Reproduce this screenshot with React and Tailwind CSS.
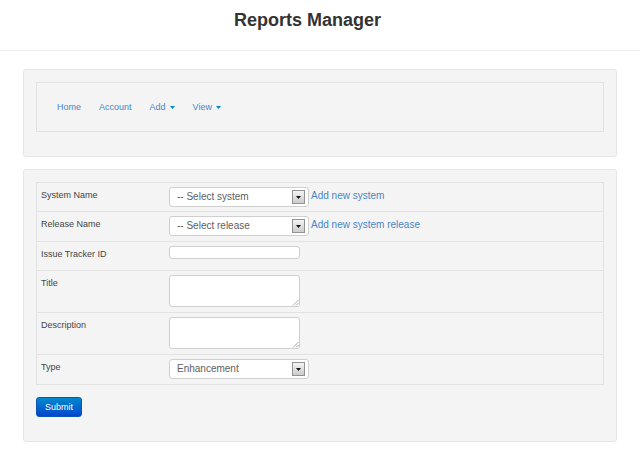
const FIELD_BORDER = 'border border-[#cfcfcf] rounded-[3px] bg-white';

function Caret() {
  return (
    <svg aria-hidden="true" className="ml-1" width="5" height="3" viewBox="0 0 5 3">
      <path d="M0 0h5L2.5 3z" fill="#0088cc" />
    </svg>
  );
}

function Card({ children }) {
  return (
    <div className="rounded-[3px] border border-[#e6e6e6] bg-[#f4f4f4] px-3 pt-3 pb-6">
      {children}
    </div>
  );
}

function Row({ id, label, height, children }) {
  return (
    <div className={`flex items-start border-t border-[#e2e2e2] pt-1 pl-1 ${height}`}>
      <label htmlFor={id} className="w-32 shrink-0 pt-px text-[9px] leading-[15px] text-[#444]">
        {label}
      </label>
      {children}
    </div>
  );
}

function Select({ id, option }) {
  return (
    <div className="relative h-5 w-[140px] shrink-0">
      <select
        id={id}
        className={`block h-5 w-full appearance-none pl-[7px] pr-5 text-[10px] leading-[18px] text-[#606060] ${FIELD_BORDER}`}
      >
        <option>{option}</option>
      </select>
      <span
        aria-hidden="true"
        className="pointer-events-none absolute top-[3px] right-1 flex h-[14px] w-[13px] items-center justify-center border border-[#929292] bg-linear-to-b from-[#f4f4f4] to-[#cccccc]"
      >
        <svg width="5" height="3" viewBox="0 0 5 3">
          <path d="M0 0h5L2.5 3z" fill="#111" />
        </svg>
      </span>
    </div>
  );
}

function TextArea({ id }) {
  return (
    <div className="relative">
      <textarea
        id={id}
        className={`block h-8 w-[131px] resize-none px-1 text-[9px] ${FIELD_BORDER}`}
      />
      <svg
        aria-hidden="true"
        className="pointer-events-none absolute right-px bottom-px"
        width="7"
        height="7"
        viewBox="0 0 7 7"
      >
        <path d="M1 6.5L6.5 1M4 6.5L6.5 4" stroke="#a0a0a0" strokeWidth="0.9" fill="none" />
      </svg>
    </div>
  );
}

export default function App() {
  const link = 'text-[#4a85c4] hover:underline';
  return (
    <div className="bg-white font-['Liberation_Sans',Arial,sans-serif]">
      <header className="border-b border-[#eeeeee] pt-2 pb-[18px] text-center">
        <h1 className="pr-[25px] text-[18px] leading-[24px] font-bold text-[#333]">
          Reports Manager
        </h1>
      </header>

      <main className="flex flex-col gap-3 px-[23px] pt-[18px] pb-5">
        <Card>
          <nav className="flex h-[50px] items-center gap-[18px] border border-[#e2e2e2] pl-5 text-[9px] leading-[15px]">
            <a href="#home" className={link}>Home</a>
            <a href="#account" className={link}>Account</a>
            <a href="#add" className={`flex items-center ${link}`}>Add<Caret /></a>
            <a href="#view" className={`flex items-center ${link}`}>View<Caret /></a>
          </nav>
        </Card>

        <Card>
          <form>
            <div className="border-x border-b border-[#e2e2e2]">
              <Row id="system" label="System Name" height="h-[29px]">
                <Select id="system" option="-- Select system" />
                <a href="#new-system" className={`ml-[2px] text-[10px] leading-[18px] ${link}`}>
                  Add new system
                </a>
              </Row>
              <Row id="release" label="Release Name" height="h-[30px]">
                <Select id="release" option="-- Select release" />
                <a href="#new-release" className={`ml-[2px] text-[10px] leading-[18px] ${link}`}>
                  Add new system release
                </a>
              </Row>
              <Row id="issue" label="Issue Tracker ID" height="h-[29px]">
                <input id="issue" type="text" className={`h-[13px] w-[131px] px-1 text-[9px] ${FIELD_BORDER}`} />
              </Row>
              <Row id="title" label="Title" height="h-[42px]">
                <TextArea id="title" />
              </Row>
              <Row id="description" label="Description" height="h-[42px]">
                <TextArea id="description" />
              </Row>
              <Row id="type" label="Type" height="h-[30px]">
                <Select id="type" option="Enhancement" />
              </Row>
            </div>
            <button
              type="submit"
              className="mt-3 block h-5 rounded-[3px] border border-[#0a55b5] bg-linear-to-b from-[#0088cc] to-[#0044cc] px-2 text-[9px] leading-[18px] text-white"
            >
              Submit
            </button>
          </form>
        </Card>
      </main>
    </div>
  );
}
